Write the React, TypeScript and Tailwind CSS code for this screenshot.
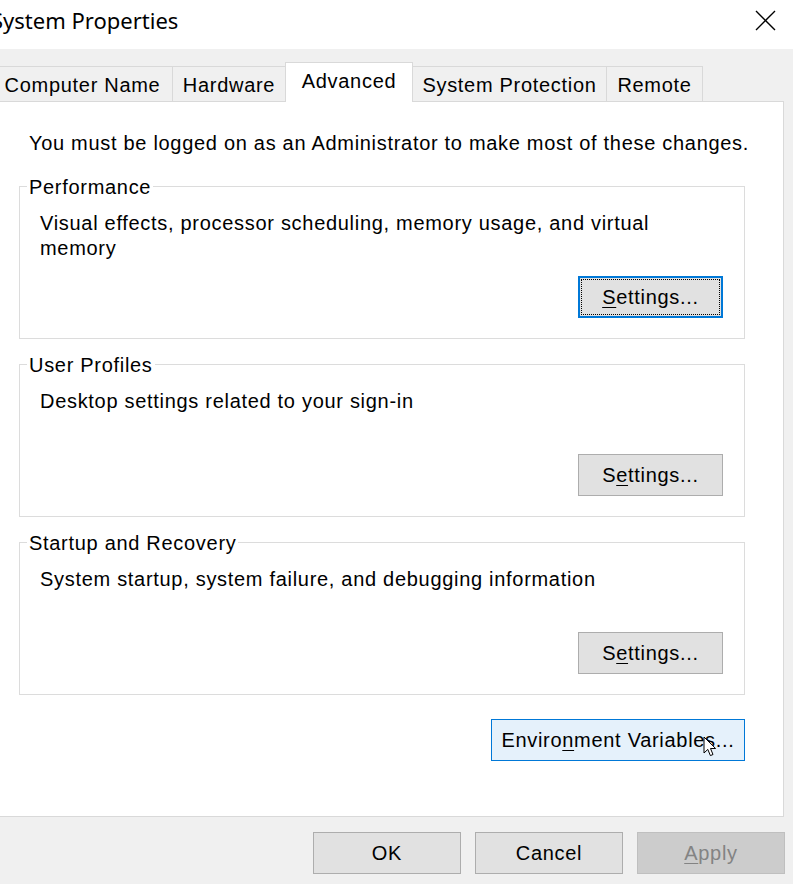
import React from "react";

const F = { fontFamily: '"Liberation Sans", Arial, sans-serif' };

function Btn({
  children,
  className,
}: {
  children: React.ReactNode;
  className: string;
}) {
  return (
    <div
      className={
        "flex items-center justify-center text-[20px] leading-[24px] tracking-[0.7px] text-black " +
        className
      }
    >
      {children}
    </div>
  );
}

function Group({
  title,
  desc,
  focused,
}: {
  title: string;
  desc: string;
  focused?: boolean;
}) {
  return (
    <div className="relative flex h-[153px] w-[726px] flex-col border border-[#dcdcdc] pb-[20px] pl-[20px] pr-[21px] pt-[24px]">
      <span className="absolute left-[7px] top-[-12px] bg-white px-[2px] text-[20px] leading-[24px] tracking-[0.7px] text-black">
        {title}
      </span>
      <div className="w-[640px] text-[20px] leading-[25px] tracking-[0.7px] text-black">{desc}</div>
      {focused ? (
        <div className="mt-auto self-end h-[42px] w-[145px] border-2 border-[#0078d7] bg-[#e1e1e1] p-[1px]">
          <div className="flex h-full w-full items-center justify-center border border-dotted border-black text-[20px] leading-[24px] tracking-[0.7px] text-black">
            <span className="underline underline-offset-[3px] decoration-1">S</span>ettings...
          </div>
        </div>
      ) : (
        <Btn className="mt-auto self-end h-[42px] w-[145px] border border-[#adadad] bg-[#e1e1e1]">
          S<span className="underline underline-offset-[3px] decoration-1">e</span>ttings...
        </Btn>
      )}
    </div>
  );
}

export default function App() {
  const tabText = "text-[20px] leading-[24px] tracking-[0.7px] text-black text-center pt-[6px]";
  return (
    <div className="flex h-[884px] w-[793px] flex-col overflow-hidden bg-[#f0f0f0]" style={F}>
      {/* title bar */}
      <div className="flex h-[49px] shrink-0 items-start justify-between bg-white">
        <div
          className="ml-[-9px] pt-[5px] text-[22px] leading-[30px] text-black"
          style={{ fontFamily: '"Noto Sans", "Open Sans", sans-serif' }}
        >
          System Properties
        </div>
        <div className="mr-[17px] mt-[10px]">
          <svg width="21" height="21" viewBox="0 0 21 21">
            <path d="M1 1 L20 20 M20 1 L1 20" stroke="#000" strokeWidth="1.4" fill="none" />
          </svg>
        </div>
      </div>

      {/* tab strip */}
      <div className="flex h-[52px] shrink-0 items-end">
        <div className={"ml-[-8px] h-[35px] w-[180px] border-l border-t border-[#d9d9d9] " + tabText}>
          Computer Name
        </div>
        <div className={"h-[35px] w-[113px] border-l border-t border-[#d9d9d9] " + tabText}>
          Hardware
        </div>
        <div
          className={
            "relative z-10 -mb-px h-[40px] w-[128px] border-l border-r border-t border-[#d9d9d9] bg-white " +
            tabText
          }
        >
          Advanced
        </div>
        <div className={"h-[35px] w-[193px] border-t border-[#d9d9d9] " + tabText}>
          System Protection
        </div>
        <div className={"h-[35px] w-[97px] border-l border-r border-t border-[#d9d9d9] " + tabText}>
          Remote
        </div>
      </div>

      {/* panel */}
      <div className="ml-[-1px] flex h-[716px] w-[785px] shrink-0 flex-col border border-[#d9d9d9] bg-white pt-[29px]">
        <div className="pl-[29px] text-[20px] leading-[24px] tracking-[0.7px] text-black">
          You must be logged on as an Administrator to make most of these changes.
        </div>
        <div className="ml-[19px] mt-[31px] flex w-[726px] flex-col">
          <Group
            title="Performance"
            desc="Visual effects, processor scheduling, memory usage, and virtual memory"
            focused
          />
          <div className="mt-[25px]">
            <Group title="User Profiles" desc="Desktop settings related to your sign-in" />
          </div>
          <div className="mt-[25px]">
            <Group
              title="Startup and Recovery"
              desc="System startup, system failure, and debugging information"
            />
          </div>
          <div className="relative mt-[24px] self-end">
            <Btn className="h-[42px] w-[254px] border border-[#0078d7] bg-[#e5f1fb]">
              Enviro<span className="underline underline-offset-[3px] decoration-1">n</span>ment Variables...
            </Btn>
            <svg
              className="absolute left-[212px] top-[17px]"
              width="14"
              height="21"
              viewBox="0 0 14 21"
            >
              <path
                d="M1 1 L1 17 L4.8 13.4 L7.4 19.6 L10 18.5 L7.5 12.5 L12.6 12.5 Z"
                fill="#fff"
                stroke="#000"
                strokeWidth="1"
                strokeLinejoin="miter"
              />
            </svg>
          </div>
        </div>
      </div>

      {/* footer */}
      <div className="flex justify-end gap-[14px] pr-[8px] pt-[15px]">
        <Btn className="h-[42px] w-[148px] border border-[#adadad] bg-[#e1e1e1]">OK</Btn>
        <Btn className="h-[42px] w-[148px] border border-[#adadad] bg-[#e1e1e1]">Cancel</Btn>
        <Btn className="h-[42px] w-[148px] border border-[#bfbfbf] bg-[#cccccc] !text-[#838383]">
          <span className="underline underline-offset-[3px] decoration-1">A</span>pply
        </Btn>
      </div>
    </div>
  );
}
